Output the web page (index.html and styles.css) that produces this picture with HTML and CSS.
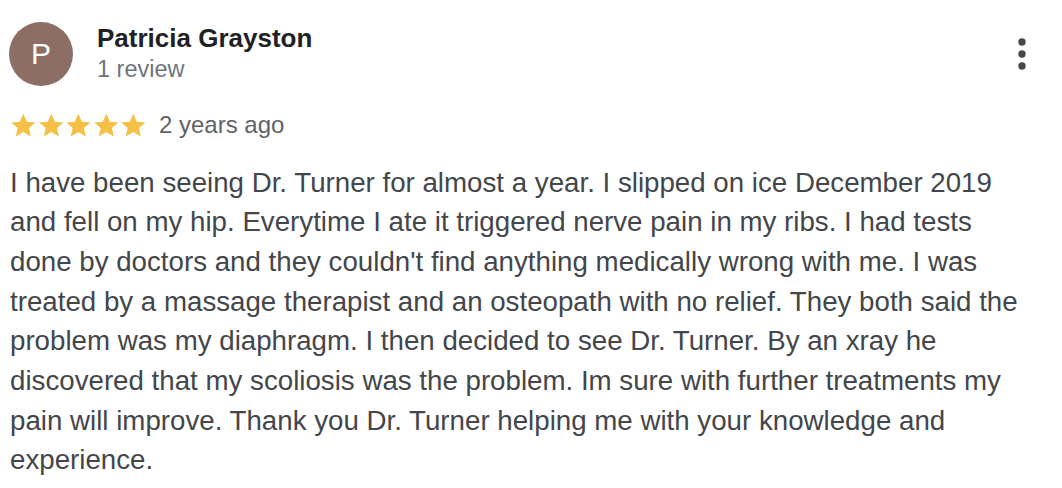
FILE: index.html
```html
<!DOCTYPE html>
<html lang="en">
<head>
<meta charset="utf-8">
<title>Review</title>
<link rel="stylesheet" href="styles.css">
</head>
<body>
<div class="review">
  <div class="header">
    <div class="avatar">P</div>
    <div class="who">
      <div class="name">Patricia Grayston</div>
      <div class="count">1 review</div>
    </div>
    <button class="more" aria-label="More options">
      <svg width="8" height="32" viewBox="0 0 8 32"><circle cx="4" cy="4" r="3.7" fill="#444746"/><circle cx="4" cy="16" r="3.7" fill="#444746"/><circle cx="4" cy="28" r="3.7" fill="#444746"/></svg>
    </button>
  </div>
  <div class="meta">
    <div class="stars">
      <svg class="star" viewBox="0 0 24 24"><path d="M12 1.6l3.2 7.1 7.7.7-5.8 5.1 1.7 7.6L12 18.1l-6.8 4 1.7-7.6L1.1 9.4l7.7-.7z"/></svg>
      <svg class="star" viewBox="0 0 24 24"><path d="M12 1.6l3.2 7.1 7.7.7-5.8 5.1 1.7 7.6L12 18.1l-6.8 4 1.7-7.6L1.1 9.4l7.7-.7z"/></svg>
      <svg class="star" viewBox="0 0 24 24"><path d="M12 1.6l3.2 7.1 7.7.7-5.8 5.1 1.7 7.6L12 18.1l-6.8 4 1.7-7.6L1.1 9.4l7.7-.7z"/></svg>
      <svg class="star" viewBox="0 0 24 24"><path d="M12 1.6l3.2 7.1 7.7.7-5.8 5.1 1.7 7.6L12 18.1l-6.8 4 1.7-7.6L1.1 9.4l7.7-.7z"/></svg>
      <svg class="star" viewBox="0 0 24 24"><path d="M12 1.6l3.2 7.1 7.7.7-5.8 5.1 1.7 7.6L12 18.1l-6.8 4 1.7-7.6L1.1 9.4l7.7-.7z"/></svg>
    </div>
    <span class="date">2 years ago</span>
  </div>
  <p class="text">I have been seeing Dr. Turner for almost a year. I slipped on ice December 2019 and fell on my hip. Everytime I ate it triggered nerve pain in my ribs. I had tests done by doctors and they couldn't find anything medically wrong with me. I was treated by a massage therapist and an osteopath with no relief. They both said the problem was my diaphragm. I then decided to see Dr. Turner. By an xray he discovered that my scoliosis was the problem. Im sure with further treatments my pain will improve. Thank you Dr. Turner helping me with your knowledge and experience.</p>
</div>
</body>
</html>
```

FILE: styles.css
```css
html, body {
  margin: 0;
  padding: 0;
  background: #ffffff;
}
body {
  font-family: "Liberation Sans", Arial, Helvetica, sans-serif;
}
.review {
  padding: 22px 22px 0 10px;
}
.header {
  display: flex;
  align-items: flex-start;
}
.avatar {
  width: 64px;
  height: 64px;
  margin-left: -1px;
  border-radius: 50%;
  background: #8c6e65;
  color: #ffffff;
  font-size: 30px;
  line-height: 64px;
  text-align: center;
  flex: none;
}
.who {
  margin-left: 24px;
  flex: 1;
}
.name {
  font-size: 26px;
  font-weight: bold;
  line-height: 30px;
  color: #202124;
  margin-top: 1px;
}
.count {
  font-size: 23.5px;
  line-height: 28px;
  color: #70757a;
  margin-top: 2px;
}
.more {
  border: 0;
  background: none;
  padding: 0;
  margin: 16px 14px 0 0;
  display: flex;
}
.meta {
  display: flex;
  align-items: center;
  margin-top: 23px;
  height: 32px;
}
.stars {
  display: flex;
  gap: 1px;
}
.star {
  width: 26.6px;
  height: 26.6px;
  fill: #f4c045;
}
.date {
  margin-left: 12px;
  font-size: 24px;
  line-height: 32px;
  color: #5f6368;
}
.text {
  margin: 21.5px 0 0 0;
  font-size: 27.7px;
  line-height: 39.7px;
  color: #43464a;
}
```
